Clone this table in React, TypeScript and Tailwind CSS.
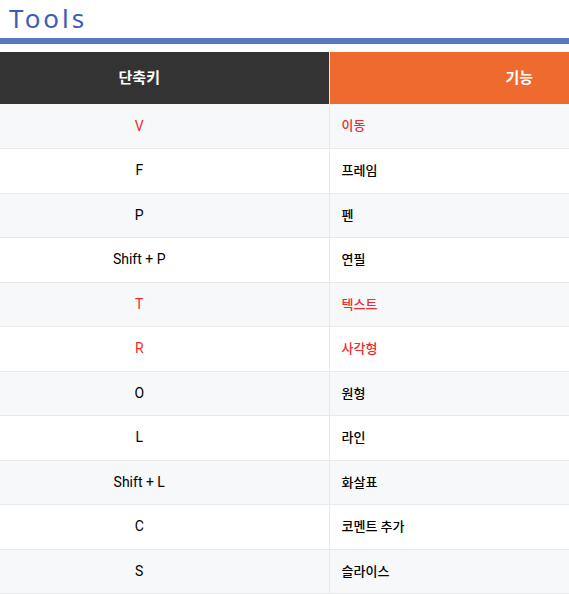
const ROWS = [
  { key: "V", label: "이동", hot: true },
  { key: "F", label: "프레임" },
  { key: "P", label: "펜" },
  { key: "Shift + P", label: "연필" },
  { key: "T", label: "텍스트", hot: true },
  { key: "R", label: "사각형", hot: true },
  { key: "O", label: "원형" },
  { key: "L", label: "라인" },
  { key: "Shift + L", label: "화살표" },
  { key: "C", label: "코멘트 추가" },
  { key: "S", label: "슬라이스" },
];

export default function App() {
  return (
    <div className="bg-white font-['Roboto','Noto_Sans_CJK_KR',sans-serif]">
      <h1 className="h-[38px] pl-[9px] pt-[2px] font-['Noto_Sans',sans-serif] text-[26px] leading-[32px] tracking-[3px] text-[#3d5cb4]">
        Tools
      </h1>
      <div className="h-[6px] bg-[#5a78c0]" />
      <table className="mt-[8px] w-full border-collapse text-[13px]">
        <thead>
          <tr className="h-[52px] text-[15px] font-bold text-white">
            <th className="w-[329px] bg-[#333333] pr-[50px] text-center">단축키</th>
            <th className="border-l border-[#e8e8e8] bg-[#ee6a2f] pr-[36px] text-right">기능</th>
          </tr>
        </thead>
        <tbody>
          {ROWS.map((row, i) => (
            <tr
              key={row.key}
              className={`h-[44.5px] border-b border-[#e8e9eb] ${i % 2 === 0 ? "bg-[#f7f8fa]" : "bg-white"} ${row.hot ? "text-[#f02b2b]" : "text-black"}`}
            >
              <td className="pr-[50px] text-center text-[14px]">{row.key}</td>
              <td className="border-l border-[#e8e9eb] pl-[12px] font-medium">{row.label}</td>
            </tr>
          ))}
        </tbody>
      </table>
    </div>
  );
}
